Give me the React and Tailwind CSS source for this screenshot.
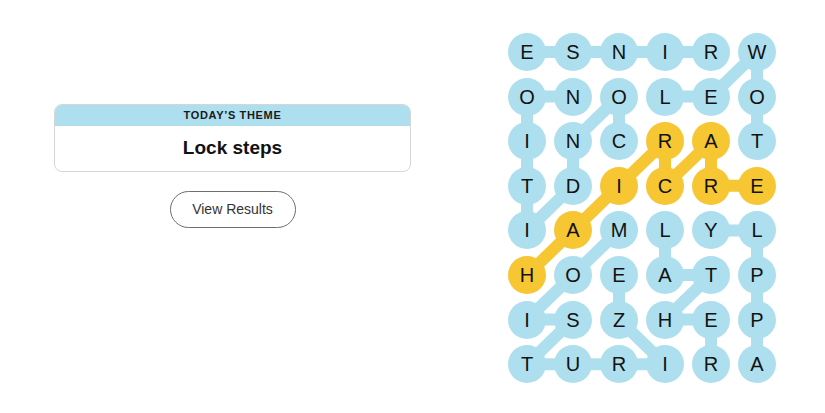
const letters = [
  "ESNIRW",
  "ONOLEO",
  "INCRAT",
  "TDICRE",
  "IAMLYL",
  "HOEATP",
  "ISZHEP",
  "TURIRA",
];

const BLUE = "#aedfee";
const YELLOW = "#f6c633";

// word paths as [row, col]
const words = [
  { color: BLUE, path: [[0, 4], [0, 3], [0, 2], [0, 1], [0, 0]] },
  { color: BLUE, path: [[2, 5], [1, 5], [0, 5], [1, 4], [1, 3]] },
  { color: BLUE, path: [[2, 2], [1, 2], [2, 1], [3, 1], [4, 0], [3, 0], [2, 0], [1, 0], [1, 1]] },
  { color: BLUE, path: [[4, 2], [5, 1], [6, 0], [6, 1], [7, 0], [7, 1], [7, 2], [7, 3], [6, 2], [5, 2]] },
  { color: BLUE, path: [[4, 3], [5, 3], [5, 4], [6, 3], [6, 4], [7, 4]] },
  { color: BLUE, path: [[7, 5], [6, 5], [5, 5], [4, 5], [4, 4]] },
  { color: YELLOW, path: [[5, 0], [4, 1], [3, 2], [2, 3], [3, 3], [2, 4], [3, 4], [3, 5]] },
];

const spangram = new Set(["5,0", "4,1", "3,2", "2,3", "3,3", "2,4", "3,4", "3,5"]);

const cx = (c) => 19 + c * 46;
const cy = (r) => 19 + r * 44.6;

function Board() {
  return (
    <div className="relative w-[268px] h-[352px]">
      <svg className="absolute inset-0" width="268" height="352">
        {words.map((w, i) => (
          <polyline
            key={i}
            points={w.path.map(([r, c]) => `${cx(c)},${cy(r)}`).join(" ")}
            fill="none"
            stroke={w.color}
            strokeWidth="12"
            strokeLinejoin="round"
          />
        ))}
      </svg>
      <div className="relative grid grid-cols-[repeat(6,38px)] gap-x-[8px] gap-y-[6.6px]">
        {letters.map((row, r) =>
          row.split("").map((ch, c) => (
            <div
              key={`${r}-${c}`}
              className={`${
                spangram.has(`${r},${c}`) ? "bg-[#f6c633]" : "bg-[#aedfee]"
              } w-[38px] h-[38px] rounded-full flex items-center justify-center text-[20px] text-[#121212] font-['Liberation_Sans',sans-serif]`}
            >
              {ch}
            </div>
          ))
        )}
      </div>
    </div>
  );
}

export default function App() {
  return (
    <div className="w-[825px] h-[413px] bg-white flex font-['Liberation_Sans',sans-serif]">
      {/* theme card + results button */}
      <div className="ml-[54px] mt-[104px] w-[357px] flex flex-col items-center">
        <div className="w-full rounded-[8px] border border-[#d6d6d6] overflow-hidden">
          <div className="h-[21px] bg-[#aedfee] flex items-center justify-center text-[11px] font-bold tracking-[0.06em] text-[#1a1a1a]">
            TODAY’S THEME
          </div>
          <div className="h-[45px] flex items-center justify-center text-[19px] font-bold text-[#111]">
            Lock steps
          </div>
        </div>
        <button className="mt-[19px] w-[126px] h-[37px] rounded-full border border-[#6e6e6e] text-[14px] text-[#333]">
          View Results
        </button>
      </div>
      {/* board */}
      <div className="ml-[97px] mt-[33px]">
        <Board />
      </div>
    </div>
  );
}
